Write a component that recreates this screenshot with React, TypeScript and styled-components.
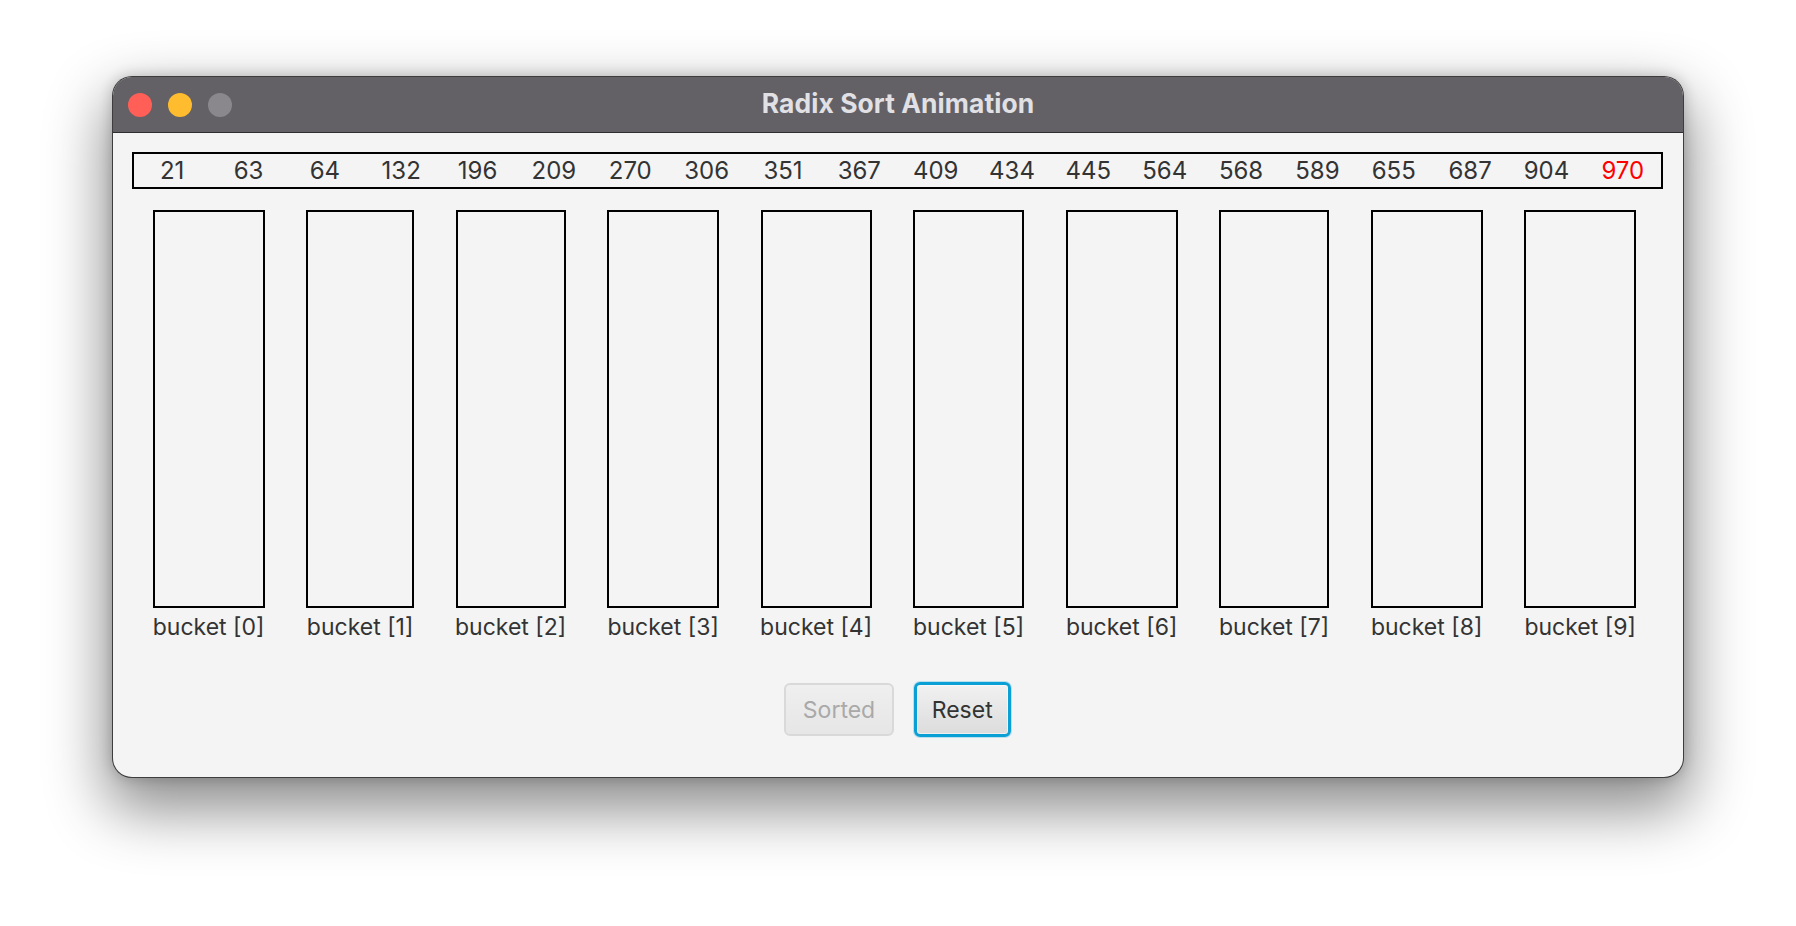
import React from "react";
import styled, { createGlobalStyle } from "styled-components";

const GlobalStyle = createGlobalStyle`
  html, body {
    margin: 0;
    padding: 0;
    background: #ffffff;
  }
  * { box-sizing: border-box; }
`;

const Page = styled.div`
  width: 1796px;
  height: 926px;
  padding: 76px 112px 148px 112px;
  background: #ffffff;
  font-family: Inter, "Liberation Sans", sans-serif;
`;

const Window = styled.div`
  width: 1572px;
  height: 702px;
  border: 1px solid rgba(0, 0, 0, 0.75);
  border-radius: 20px;
  overflow: hidden;
  display: flex;
  flex-direction: column;
  background: #f4f4f4;
  box-shadow: 0 26px 60px 6px rgba(0, 0, 0, 0.45), 0 0 14px rgba(0, 0, 0, 0.2);
`;

const TitleBar = styled.div`
  height: 56px;
  flex: none;
  background: #636166;
  border-bottom: 1px solid #2e2d30;
  display: grid;
  grid-template-columns: 1fr auto 1fr;
  align-items: center;
  padding: 0 15px;
`;

const Lights = styled.div`
  display: flex;
  gap: 16px;
  align-items: center;
`;

const Light = styled.span<{ $c: string }>`
  width: 24px;
  height: 24px;
  border-radius: 50%;
  background: ${(p) => p.$c};
`;

const Title = styled.div`
  color: #e1e0e4;
  font-family: Inter, "Liberation Sans", sans-serif;
  font-weight: 700;
  font-size: 26.4px;
  letter-spacing: 0.1px;
  margin-top: -3px;
`;

const Content = styled.div`
  flex: 1;
  padding: 19px 20px 0 19px;
  display: flex;
  flex-direction: column;
`;

const ArrayBox = styled.div`
  height: 37px;
  border: 2px solid #000;
  display: grid;
  grid-template-columns: repeat(20, 1fr);
  align-items: center;
`;

const Num = styled.span<{ $hot?: boolean }>`
  text-align: center;
  font-size: 24px;
  line-height: 33px;
  color: ${(p) => (p.$hot ? "#ff0000" : "#333333")};
`;

const BucketRow = styled.div`
  display: flex;
  gap: 41.5px;
  margin-top: 21px;
  padding-left: 20.6px;
`;

const Bucket = styled.div`
  display: flex;
  flex-direction: column;
  align-items: stretch;
`;

const BucketRect = styled.div`
  height: 398px;
  border: 2px solid #000;
`;

const BucketLabel = styled.div`
  font-size: 23px;
  line-height: 38px;
  color: #333333;
  text-align: center;
  white-space: nowrap;
  margin: 0 -6px;
`;

const ButtonRow = styled.div`
  display: flex;
  justify-content: center;
  align-items: center;
  gap: 20px;
  margin-top: 36px;
`;

const Btn = styled.button<{ $focused?: boolean }>`
  height: ${(p) => (p.$focused ? "55px" : "53px")};
  padding: 0 ${(p) => (p.$focused ? "15px" : "16.5px")};
  font-family: Inter, "Liberation Sans", sans-serif;
  font-size: 23px;
  border-radius: 6px;
  color: ${(p) => (p.$focused ? "#333333" : "#a9a9a9")};
  background: ${(p) =>
    p.$focused
      ? "linear-gradient(#f1f1f1, #dcdcdc)"
      : "linear-gradient(#efefef, #e6e6e6)"};
  border: ${(p) => (p.$focused ? "3px solid #0aa0d6" : "2px solid #d9d9d9")};
  box-shadow: ${(p) =>
    p.$focused
      ? "inset 0 0 0 1px rgba(255,255,255,0.55), 0 0 0 1px rgba(10,160,214,0.25)"
      : "none"};
  cursor: default;
`;

const numbers = [21, 63, 64, 132, 196, 209, 270, 306, 351, 367, 409, 434, 445, 564, 568, 589, 655, 687, 904, 970];
const bucketWidths = [112, 108, 110, 112, 111, 111, 112, 110, 112, 112];

export default function App() {
  return (
    <>
      <GlobalStyle />
      <Page>
        <Window>
          <TitleBar>
            <Lights>
              <Light $c="#ff5f57" />
              <Light $c="#febc2e" />
              <Light $c="#8a888d" />
            </Lights>
            <Title>Radix Sort Animation</Title>
            <div />
          </TitleBar>
          <Content>
            <ArrayBox>
              {numbers.map((n, i) => (
                <Num key={n} $hot={i === numbers.length - 1}>
                  {n}
                </Num>
              ))}
            </ArrayBox>
            <BucketRow>
              {bucketWidths.map((w, i) => (
                <Bucket key={i} style={{ width: w }}>
                  <BucketRect />
                  <BucketLabel>bucket [{i}]</BucketLabel>
                </Bucket>
              ))}
            </BucketRow>
            <ButtonRow>
              <Btn disabled>Sorted</Btn>
              <Btn $focused>Reset</Btn>
            </ButtonRow>
          </Content>
        </Window>
      </Page>
    </>
  );
}
